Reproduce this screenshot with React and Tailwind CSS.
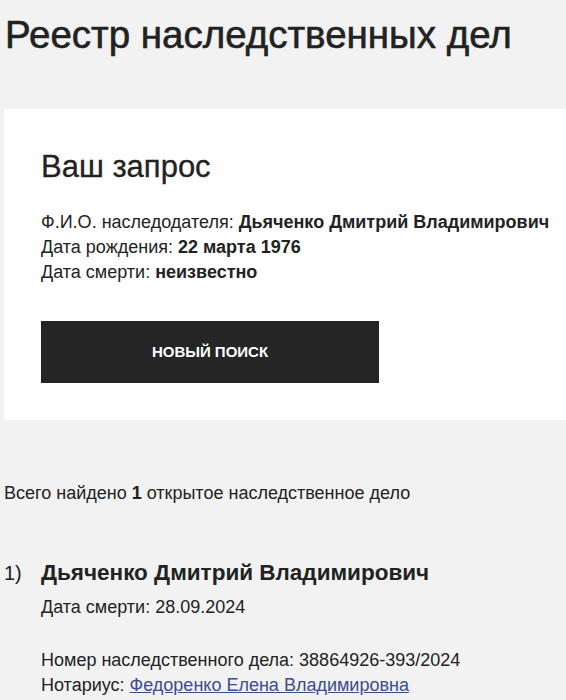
export default function App() {
  return (
    <div className="min-h-[700px] w-[566px] overflow-hidden bg-[#f2f2f2] text-[#222222]" style={{ fontFamily: '"Liberation Sans", Arial, sans-serif' }}>
      <h1 className="pl-[5px] pt-[12px] text-[38.5px] leading-[46px] font-normal [-webkit-text-stroke:0.6px_#222222]">Реестр наследственных дел</h1>
      <div className="mt-[51px] ml-[4px] bg-white pl-[37px] pt-[39px] pb-[37px] w-[600px]">
        <h2 className="text-[31px] leading-[38px] font-normal [-webkit-text-stroke:0.3px_#222222]">Ваш запрос</h2>
        <div className="mt-[24px] text-[18px] leading-[25px]">
          <div>Ф.И.О. наследодателя: <b className="font-bold">Дьяченко Дмитрий Владимирович</b></div>
          <div>Дата рождения: <b className="font-bold">22 марта 1976</b></div>
          <div>Дата смерти: <b className="font-bold">неизвестно</b></div>
        </div>
        <button className="mt-[36px] flex h-[62px] w-[338px] items-center justify-center bg-[#252525] text-[15px] font-bold text-white">НОВЫЙ ПОИСК</button>
      </div>
      <div className="mt-[61px] pl-[4px] text-[18px] leading-[25px]">
        Всего найдено <b className="font-bold">1</b> открытое наследственное дело
      </div>
      <div className="mt-[52px] flex text-[18px] leading-[25px]">
        <div className="w-[41px] pl-[4px] text-[20px] leading-[30px]">1)</div>
        <div>
          <div className="text-[22.5px] leading-[30px] font-bold">Дьяченко Дмитрий Владимирович</div>
          <div className="mt-[7px]">Дата смерти: 28.09.2024</div>
          <div className="mt-[28px]">Номер наследственного дела: 38864926-393/2024</div>
          <div>Нотариус: <a href="#" className="text-[#3a4d8f] underline">Федоренко Елена Владимировна</a></div>
        </div>
      </div>
    </div>
  );
}
